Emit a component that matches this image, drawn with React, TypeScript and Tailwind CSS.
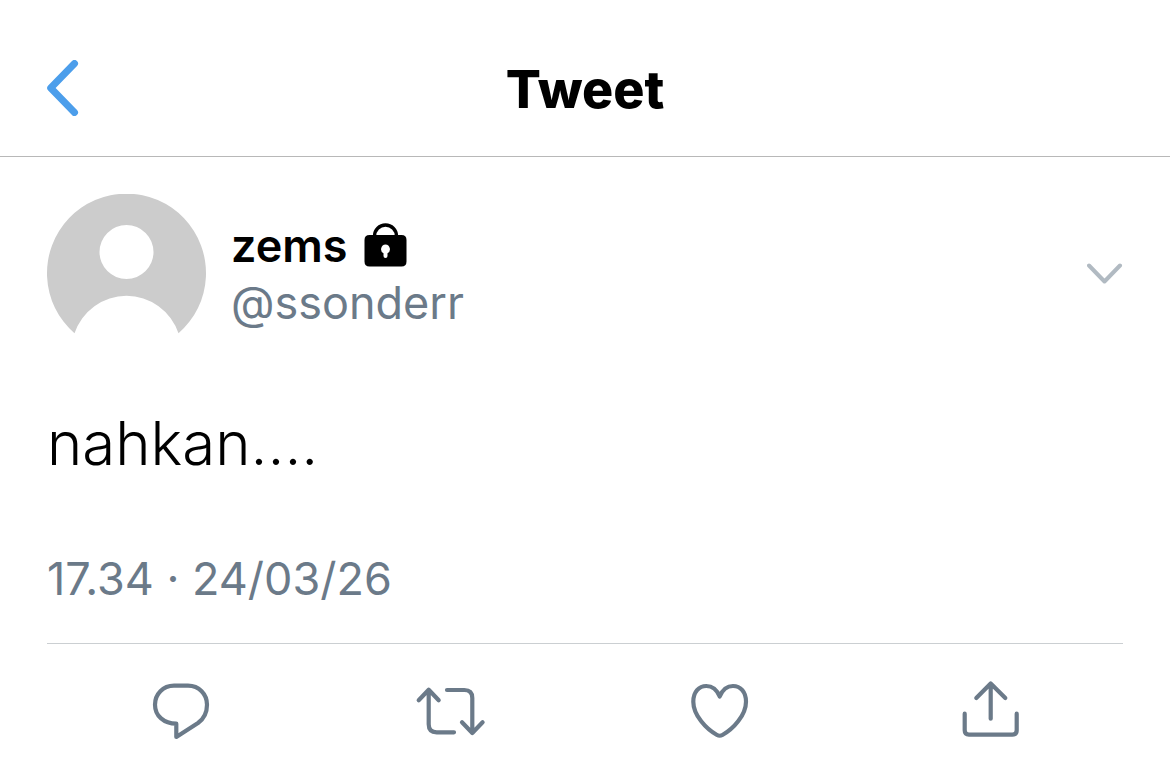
import { useState } from "react";
import type { ReactNode } from "react";

const TWEET = {
    name: "zems",
    handle: "@ssonderr",
    text: "nahkan....",
    time: "17.34",
    date: "24/03/26",
};

type Action = {
    id: string;
    label: string;
    viewBox: string;
    icon: ReactNode;
};

const ACTIONS: Action[] = [
    {
        id: "reply",
        label: "Reply",
        viewBox: "-6 -2 72 64",
        icon: (
            <path d="M24.3 41.7V55L46 41C51.5 37 55 30.5 55 22.7C55 12 47 3.7 36 3.7H22C11 3.7 3 12 3 22.7C3 34 12 41.7 24.3 41.7Z" />
        ),
    },
    {
        id: "retweet",
        label: "Retweet",
        viewBox: "-1 -2 72 64",
        icon: (
            <>
                <path d="M2.7 18.3L12.7 7.7L22.7 18.3M12.7 8V42.3Q12.7 50.3 20.7 50.3H38" />
                <path d="M31 8H48.3Q56.3 8 56.3 16V50.5M46 40.3L56.3 51L66.6 40.3" />
            </>
        ),
    },
    {
        id: "like",
        label: "Like",
        viewBox: "-6 -2 72 64",
        icon: (
            <path d="M29.7 14.5C27 8 22 4 16.3 4C9 4 3.3 10 3.3 19.7C3.3 33 16 47 27 53Q29.7 54.5 32.4 53C43.4 47 56 33 56 19.7C56 10 50.4 4 43 4C37.4 4 32.4 8 29.7 14.5Z" />
        ),
    },
    {
        id: "share",
        label: "Share",
        viewBox: "-7 0 72 64",
        icon: (
            <>
                <path d="M16.3 18L30.7 3.5L45.3 18M30.7 4V38.7" />
                <path d="M4.7 33.7V50.3Q4.7 54.6 9 54.6H52.4Q56.7 54.6 56.7 50.3V33.7" />
            </>
        ),
    },
];

function Avatar() {
    return (
        <svg className="w-40 h-40 shrink-0" viewBox="0 0 160 160" role="img" aria-label="Profile picture">
            <path
                fill="#cccccc"
                fillRule="evenodd"
                d="M27.5 139.3A79.5 79.5 0 1 1 131.5 139.3A54.8 54.8 0 0 0 27.5 139.3ZM79.5 31A27 27 0 1 0 79.5 85A27 27 0 1 0 79.5 31Z"
            />
        </svg>
    );
}

function LockIcon() {
    return (
        <svg className="w-11 h-[46px]" viewBox="0 0 44 46" role="img" aria-label="Protected account">
            <path d="M10.5 14V13A11 11 0 0 1 32.5 13V14" fill="none" stroke="#000" strokeWidth="3.4" />
            <path
                fillRule="evenodd"
                d="M5.5 12H37.5Q42.5 12 42.5 17V38.5Q42.5 43.5 37.5 43.5H5.5Q0.5 43.5 0.5 38.5V17Q0.5 12 5.5 12ZM21.5 21.5A4.7 4.7 0 0 0 19.5 30.3V33Q19.5 35 21.5 35Q23.5 35 23.5 33V30.3A4.7 4.7 0 0 0 21.5 21.5Z"
            />
        </svg>
    );
}

export default function App() {
    const [active, setActive] = useState<string | null>(null);

    return (
        <div className="min-h-screen bg-white font-['Inter','Liberation_Sans',sans-serif] text-black">
            {/* Top bar */}
            <header className="grid grid-cols-[1fr_auto_1fr] items-start px-[47px] pt-[60px] pb-9 border-b border-[#b8b8b8]">
                <button type="button" aria-label="Back" className="justify-self-start">
                    <svg
                        className="w-8 h-14"
                        viewBox="0 0 32 56"
                        fill="none"
                        stroke="#4c9eeb"
                        strokeWidth="7"
                        strokeLinecap="round"
                        strokeLinejoin="round"
                    >
                        <path d="M27.5 3.5L3.7 28L27.5 52.5" />
                    </svg>
                </button>
                <h1 className="text-[52px] leading-[60px] font-extrabold">Tweet</h1>
            </header>

            <main className="px-[47px] pt-[37px]">
                <article>
                    {/* Author */}
                    <div className="flex items-center">
                        <Avatar />
                        <div className="ml-6 flex-1 text-[45px] leading-[57px]">
                            <div className="flex items-center gap-4">
                                <span className="font-semibold">{TWEET.name}</span>
                                <LockIcon />
                            </div>
                            <p className="text-[#6b7a89]">{TWEET.handle}</p>
                        </div>
                        <button type="button" aria-label="More options">
                            <svg
                                className="w-9 h-6"
                                viewBox="0 0 36 24"
                                fill="none"
                                stroke="#b1bac2"
                                strokeWidth="4"
                                strokeLinecap="round"
                                strokeLinejoin="round"
                            >
                                <path d="M2 3.5L17.5 19.5L33 3.5" />
                            </svg>
                        </button>
                    </div>

                    <p className="mt-[49px] text-[60px] leading-[80px] font-light">{TWEET.text}</p>

                    <p className="mt-[68px] text-[45px] leading-[56px] text-[#6b7a89]">
                        <time>
                            {TWEET.time} · {TWEET.date}
                        </time>
                    </p>
                </article>

                {/* Actions */}
                <div className="mt-9 pt-9 grid grid-cols-4 justify-items-center border-t border-[#cbcfd2]">
                    {ACTIONS.map((action) => (
                        <button
                            key={action.id}
                            type="button"
                            aria-label={action.label}
                            aria-pressed={active === action.id}
                            onClick={() => setActive(active === action.id ? null : action.id)}
                        >
                            <svg
                                className="w-[72px] h-16"
                                viewBox={action.viewBox}
                                fill="none"
                                stroke="#6b7a89"
                                strokeWidth="4.2"
                                strokeLinecap="round"
                                strokeLinejoin="round"
                            >
                                {action.icon}
                            </svg>
                        </button>
                    ))}
                </div>
            </main>
        </div>
    );
}
